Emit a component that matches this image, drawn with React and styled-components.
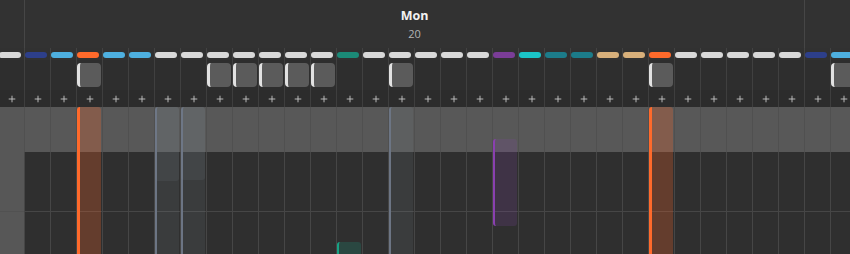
import React from "react";
import styled, { createGlobalStyle } from "styled-components";
import { Plus } from "lucide-react";

const GlobalStyle = createGlobalStyle`
  html, body {
    margin: 0;
    padding: 0;
    background: #323232;
  }
  body {
    font-family: "Open Sans", "Noto Sans", sans-serif;
  }
`;

const Page = styled.div`
  width: 850px;
  height: 254px;
  overflow: hidden;
  background: #323232;
`;

const DayHeader = styled.div`
  display: grid;
  grid-template-columns: 25px 780px 1fr;
  height: 48px;
`;

const DayCell = styled.div`
  border-right: ${(p) => (p.$last ? "none" : "1px solid #464646")};
  display: flex;
  flex-direction: column;
  align-items: center;
  padding-top: 8px;
  box-sizing: border-box;
`;

const DayName = styled.div`
  font-size: 12.5px;
  font-weight: 700;
  line-height: 16px;
  color: #f2f2f2;
`;

const DayDate = styled.div`
  font-size: 11px;
  line-height: 15px;
  margin-top: 2px;
  color: #b4b4b4;
`;

const Track = styled.div`
  display: flex;
  margin-left: -2px;
`;

const Slot = styled.div`
  position: relative;
  flex: none;
  width: 26px;
  display: flex;
  flex-direction: column;
`;

const PillCell = styled.div`
  height: 12px;
  box-sizing: border-box;
  padding-top: 4px;
  background: #313131;
  border-left: 1px solid #424242;
`;

const Pill = styled.div`
  width: 22px;
  height: 6px;
  border-radius: 3px;
  background: ${(p) => p.$color};
`;

const BlockCell = styled.div`
  height: 30px;
  box-sizing: border-box;
  padding-top: 3px;
  background: #2e2e2e;
  border-left: 1px solid #404040;
`;

const Block = styled.div`
  width: 24px;
  height: 24px;
  box-sizing: border-box;
  border-radius: 4px;
  background: #5b5b5b;
  border-left: 3px solid #e2e2e2;
`;

const PlusCell = styled.div`
  height: 17px;
  display: flex;
  align-items: center;
  justify-content: center;
  background: #2c2c2c;
  border-left: 1px solid #3e3e3e;
  color: #c4c4c4;
`;

const BandCell = styled.div`
  height: 45px;
  background: ${(p) => (p.$stub ? "#575757" : "#585858")};
  border-left: 1px solid #505050;
`;

const GridCell = styled.div`
  height: ${(p) => p.$h}px;
  background: ${(p) => (p.$stub ? "#575757" : "#2f2f2f")};
  border-left: 1px solid ${(p) => (p.$stub ? "#505050" : "#464646")};
  border-bottom: ${(p) => (p.$ruled ? `1px solid ${p.$stub ? "#515151" : "#464646"}` : "none")};
`;

const Event = styled.div`
  position: absolute;
  left: 1px;
  width: 24px;
  top: ${(p) => p.$top}px;
  height: ${(p) => p.$height}px;
  box-sizing: border-box;
  border-radius: 3px;
  background: ${(p) => p.$fill};
  border-left: ${(p) => (p.$line ? `${p.$lineWidth}px solid ${p.$line}` : "none")};
`;

const W = "#d9d9d9";
const DB = "#2d3f8a";
const LB = "#4eb0e0";
const OR = "#ff6a2b";
const TEAL = "#1b8a77";
const PUR = "#7b3d97";
const CY = "#1bc5c8";
const TB = "#1c7c8a";
const TAN = "#d8b07b";

const pills = [
  W, DB, LB, OR, LB, LB, W, W, W, W, W, W, W, TEAL, W, W, W,
  W, W, PUR, CY, TB, TB, TAN, TAN, OR, W, W, W, W, W, DB, LB,
];

const blocks = [3, 8, 9, 10, 11, 12, 15, 25, 32];

const ORANGE_EVT = { line: "#ff6a2b", lineWidth: 3, fill: "rgba(255,106,43,0.26)" };
const SLATE_EVT = { line: "#6c7584", lineWidth: 2.5, fill: "rgba(128,140,146,0.14)" };
const SLATE_SHORT = { fill: "rgba(128,140,146,0.12)" };

// y coords are page coords, slots start at y=48
const events = [
  { col: 3, y: 107, h: 160, ...ORANGE_EVT },
  { col: 6, y: 107, h: 160, ...SLATE_EVT },
  { col: 6, y: 107, h: 74, ...SLATE_SHORT },
  { col: 7, y: 107, h: 160, ...SLATE_EVT },
  { col: 7, y: 107, h: 73, ...SLATE_SHORT },
  { col: 13, y: 242, h: 40, line: "#17a385", lineWidth: 2.5, fill: "rgba(30,150,125,0.24)" },
  { col: 15, y: 107, h: 160, ...SLATE_EVT },
  { col: 19, y: 139, h: 87, line: "#8a40b0", lineWidth: 2.5, fill: "rgba(130,70,165,0.2)" },
  { col: 25, y: 107, h: 160, ...ORANGE_EVT },
];

export default function App() {
  return (
    <>
      <GlobalStyle />
      <Page>
        <DayHeader>
          <DayCell />
          <DayCell>
            <DayName>Mon</DayName>
            <DayDate>20</DayDate>
          </DayCell>
          <DayCell $last />
        </DayHeader>
        <Track>
          {pills.map((color, i) => (
            <Slot key={i}>
              <PillCell>
                <Pill $color={color} />
              </PillCell>
              <BlockCell>{blocks.includes(i) && <Block />}</BlockCell>
              <PlusCell>
                <Plus size={10} strokeWidth={2.2} />
              </PlusCell>
              <BandCell $stub={i === 0} />
              <GridCell $h={59} $ruled $stub={i === 0} />
              <GridCell $h={60} $stub={i === 0} />
              {events
                .filter((e) => e.col === i)
                .map((e, k) => (
                  <Event
                    key={k}
                    $top={e.y - 48}
                    $height={e.h}
                    $fill={e.fill}
                    $line={e.line}
                    $lineWidth={e.lineWidth}
                  />
                ))}
            </Slot>
          ))}
        </Track>
      </Page>
    </>
  );
}
